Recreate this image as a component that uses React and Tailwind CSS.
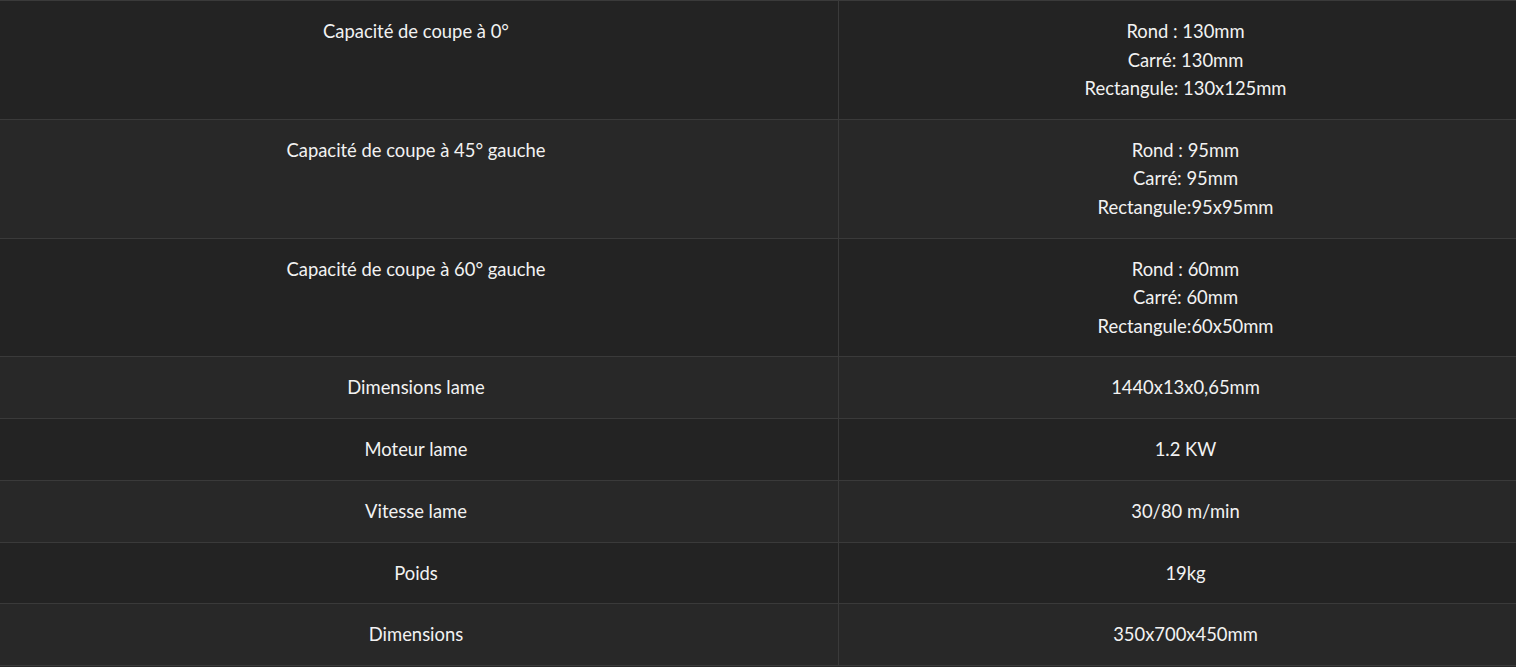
import React from "react";

const rows = [
  { label: "Capacité de coupe à 0°", value: ["Rond : 130mm", "Carré: 130mm", "Rectangule: 130x125mm"] },
  { label: "Capacité de coupe à 45° gauche", value: ["Rond : 95mm", "Carré: 95mm", "Rectangule:95x95mm"] },
  { label: "Capacité de coupe à 60° gauche", value: ["Rond : 60mm", "Carré: 60mm", "Rectangule:60x50mm"] },
  { label: "Dimensions lame", value: ["1440x13x0,65mm"] },
  { label: "Moteur lame", value: ["1.2 KW"] },
  { label: "Vitesse lame", value: ["30/80 m/min"] },
  { label: "Poids", value: ["19kg"] },
  { label: "Dimensions", value: ["350x700x450mm"] },
];

function SpecRow({ row, index }) {
  const bg = index % 2 === 0 ? "bg-[#232323]" : "bg-[#282828]";
  return (
    <div className={`grid grid-cols-[845px_695px] border-b border-[#3a3a3a] ${bg}`}>
      <div className="px-2 pt-4 pb-[16.25px] text-center border-r border-[#3a3a3a]">{row.label}</div>
      <div className="pl-2 pr-[10px] pt-4 pb-[16.25px] text-center">
        {row.value.map((line) => (
          <div key={line}>{line}</div>
        ))}
      </div>
    </div>
  );
}

export default function App() {
  return (
    <div className="w-full h-[667px] overflow-hidden bg-[#282828]">
      <div
        className="w-[1540px] -ml-[6px] border-t border-[#3a3a3a] text-[18.4px] leading-[28.5px] text-[#f2f2f2]"
        style={{ fontFamily: "Lato, 'Liberation Sans', sans-serif" }}
      >
        {rows.map((row, i) => (
          <SpecRow key={row.label} row={row} index={i} />
        ))}
      </div>
    </div>
  );
}
